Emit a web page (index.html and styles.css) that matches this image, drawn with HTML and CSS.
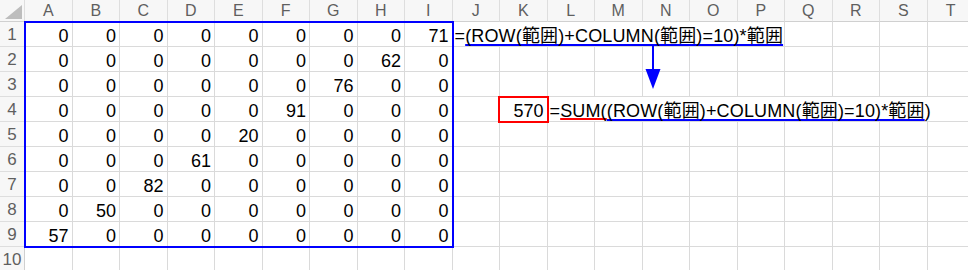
FILE: index.html
```html
<!DOCTYPE html>
<html lang="ja">
<head>
<meta charset="utf-8">
<title>Sheet</title>
<link rel="stylesheet" href="styles.css">
</head>
<body>
<div class="stage">
  <div class="sheet">
    <div class="hd corner"><svg class="tri" width="17" height="14" viewBox="0 0 17 14"><polygon points="17,0 17,14 0,14" fill="#bdbdbd"/></svg></div>
    <div class="hd">A</div><div class="hd">B</div><div class="hd">C</div><div class="hd">D</div><div class="hd">E</div><div class="hd">F</div><div class="hd">G</div><div class="hd">H</div><div class="hd">I</div><div class="hd">J</div><div class="hd">K</div><div class="hd">L</div><div class="hd">M</div><div class="hd">N</div><div class="hd">O</div><div class="hd">P</div><div class="hd">Q</div><div class="hd">R</div><div class="hd">S</div><div class="hd">T</div>

    <div class="rh">1</div>
    <div class="cell num">0</div><div class="cell num">0</div><div class="cell num">0</div><div class="cell num">0</div><div class="cell num">0</div><div class="cell num">0</div><div class="cell num">0</div><div class="cell num">0</div><div class="cell num">71</div>
    <div class="cell span7 formula">=<span class="ub">(ROW(範囲)+COLUMN(範囲)=10)*範囲</span></div>
    <div class="cell"></div><div class="cell"></div><div class="cell"></div><div class="cell"></div>

    <div class="rh">2</div>
    <div class="cell num">0</div><div class="cell num">0</div><div class="cell num">0</div><div class="cell num">0</div><div class="cell num">0</div><div class="cell num">0</div><div class="cell num">0</div><div class="cell num">62</div><div class="cell num">0</div>
    <div class="cell"></div><div class="cell"></div><div class="cell"></div><div class="cell"></div><div class="cell"></div><div class="cell"></div><div class="cell"></div><div class="cell"></div><div class="cell"></div><div class="cell"></div><div class="cell"></div>

    <div class="rh">3</div>
    <div class="cell num">0</div><div class="cell num">0</div><div class="cell num">0</div><div class="cell num">0</div><div class="cell num">0</div><div class="cell num">0</div><div class="cell num">76</div><div class="cell num">0</div><div class="cell num">0</div>
    <div class="cell"></div><div class="cell"></div><div class="cell"></div><div class="cell"></div><div class="cell"></div><div class="cell"></div><div class="cell"></div><div class="cell"></div><div class="cell"></div><div class="cell"></div><div class="cell"></div>

    <div class="rh">4</div>
    <div class="cell num">0</div><div class="cell num">0</div><div class="cell num">0</div><div class="cell num">0</div><div class="cell num">0</div><div class="cell num">91</div><div class="cell num">0</div><div class="cell num">0</div><div class="cell num">0</div>
    <div class="cell"></div>
    <div class="cell num">570</div>
    <div class="cell span9 formula">=<span class="ur">SUM(</span><span class="ub">(ROW(範囲)+COLUMN(範囲)=10)*範囲</span>)</div>

    <div class="rh">5</div>
    <div class="cell num">0</div><div class="cell num">0</div><div class="cell num">0</div><div class="cell num">0</div><div class="cell num">20</div><div class="cell num">0</div><div class="cell num">0</div><div class="cell num">0</div><div class="cell num">0</div>
    <div class="cell"></div><div class="cell"></div><div class="cell"></div><div class="cell"></div><div class="cell"></div><div class="cell"></div><div class="cell"></div><div class="cell"></div><div class="cell"></div><div class="cell"></div><div class="cell"></div>

    <div class="rh">6</div>
    <div class="cell num">0</div><div class="cell num">0</div><div class="cell num">0</div><div class="cell num">61</div><div class="cell num">0</div><div class="cell num">0</div><div class="cell num">0</div><div class="cell num">0</div><div class="cell num">0</div>
    <div class="cell"></div><div class="cell"></div><div class="cell"></div><div class="cell"></div><div class="cell"></div><div class="cell"></div><div class="cell"></div><div class="cell"></div><div class="cell"></div><div class="cell"></div><div class="cell"></div>

    <div class="rh">7</div>
    <div class="cell num">0</div><div class="cell num">0</div><div class="cell num">82</div><div class="cell num">0</div><div class="cell num">0</div><div class="cell num">0</div><div class="cell num">0</div><div class="cell num">0</div><div class="cell num">0</div>
    <div class="cell"></div><div class="cell"></div><div class="cell"></div><div class="cell"></div><div class="cell"></div><div class="cell"></div><div class="cell"></div><div class="cell"></div><div class="cell"></div><div class="cell"></div><div class="cell"></div>

    <div class="rh">8</div>
    <div class="cell num">0</div><div class="cell num">50</div><div class="cell num">0</div><div class="cell num">0</div><div class="cell num">0</div><div class="cell num">0</div><div class="cell num">0</div><div class="cell num">0</div><div class="cell num">0</div>
    <div class="cell"></div><div class="cell"></div><div class="cell"></div><div class="cell"></div><div class="cell"></div><div class="cell"></div><div class="cell"></div><div class="cell"></div><div class="cell"></div><div class="cell"></div><div class="cell"></div>

    <div class="rh">9</div>
    <div class="cell num">57</div><div class="cell num">0</div><div class="cell num">0</div><div class="cell num">0</div><div class="cell num">0</div><div class="cell num">0</div><div class="cell num">0</div><div class="cell num">0</div><div class="cell num">0</div>
    <div class="cell"></div><div class="cell"></div><div class="cell"></div><div class="cell"></div><div class="cell"></div><div class="cell"></div><div class="cell"></div><div class="cell"></div><div class="cell"></div><div class="cell"></div><div class="cell"></div>

    <div class="rh">10</div>
    <div class="cell"></div><div class="cell"></div><div class="cell"></div><div class="cell"></div><div class="cell"></div><div class="cell"></div><div class="cell"></div><div class="cell"></div><div class="cell"></div>
    <div class="cell"></div><div class="cell"></div><div class="cell"></div><div class="cell"></div><div class="cell"></div><div class="cell"></div><div class="cell"></div><div class="cell"></div><div class="cell"></div><div class="cell"></div><div class="cell"></div>
  </div>

  <div class="marks">
    <div class="range"></div>
    <div class="pick"></div>
    <svg class="arrow" width="48" height="75" viewBox="0 0 48 75">
      <line x1="10" y1="23" x2="10" y2="50" stroke="#0000ff" stroke-width="2"/>
      <polygon points="2.5,47 17.5,47 10,67" fill="#0000ff"/>
    </svg>
  </div>
</div>
</body>
</html>
```

FILE: styles.css
```css
html, body {
  margin: 0;
  padding: 0;
  background: #ffffff;
  overflow: hidden;
}

body {
  font-family: "Liberation Sans", "Noto Sans CJK JP", sans-serif;
}

.stage {
  display: grid;
  width: 968px;
  height: 270px;
  overflow: hidden;
}

.sheet,
.marks {
  grid-area: 1 / 1;
  display: grid;
  grid-template-columns: 25px repeat(20, 47.5px);
  grid-template-rows: 22px repeat(10, 25px);
}

.marks {
  pointer-events: none;
  z-index: 1;
}

.hd {
  box-sizing: border-box;
  background: #f7f7f7;
  color: #5f5f5f;
  font-size: 16px;
  display: flex;
  align-items: center;
  justify-content: center;
  border-right: 1px solid #dedede;
  border-bottom: 1px solid #d0d0d0;
}

.corner {
  align-items: flex-end;
  justify-content: flex-end;
  padding: 0 2px 2px 0;
}

.tri {
  display: block;
}

.rh {
  box-sizing: border-box;
  background: #f7f7f7;
  color: #5f5f5f;
  font-size: 17px;
  display: flex;
  align-items: center;
  justify-content: center;
  border-right: 1px solid #d0d0d0;
  border-bottom: 1px solid #dedede;
  padding-top: 2px;
}

.cell {
  box-sizing: border-box;
  border-right: 1px solid #dadada;
  border-bottom: 1px solid #dadada;
  font-size: 18px;
  line-height: 20px;
  color: #000000;
  display: flex;
  align-items: flex-end;
  padding: 0 3px 0 3px;
  white-space: nowrap;
  min-width: 0;
}

.num {
  justify-content: flex-end;
}

.formula {
  letter-spacing: 0.15px;
}

.span7 {
  grid-column: span 7;
  padding-left: 2px;
}

.span9 {
  grid-column: span 9;
  padding-left: 2px;
}

.ub {
  text-decoration-line: underline;
  text-decoration-thickness: 2px;
  text-decoration-color: #0000ff;
  text-decoration-skip-ink: none;
  text-underline-offset: 2px;
}

.ur {
  text-decoration-line: underline;
  text-decoration-thickness: 2px;
  text-decoration-color: #ff0000;
  text-decoration-skip-ink: none;
  text-underline-offset: 1px;
}

.range {
  grid-column: 2 / 11;
  grid-row: 2 / 11;
  border: 2px solid #0000ff;
  margin: -1px -1.5px -1px -1px;
}

.pick {
  grid-column: 12 / 13;
  grid-row: 5 / 6;
  border: 2px solid #ff0000;
  margin: -1px -1px -1px -2px;
}

.arrow {
  grid-column: 15 / 16;
  grid-row: 2 / 5;
  display: block;
}
```
